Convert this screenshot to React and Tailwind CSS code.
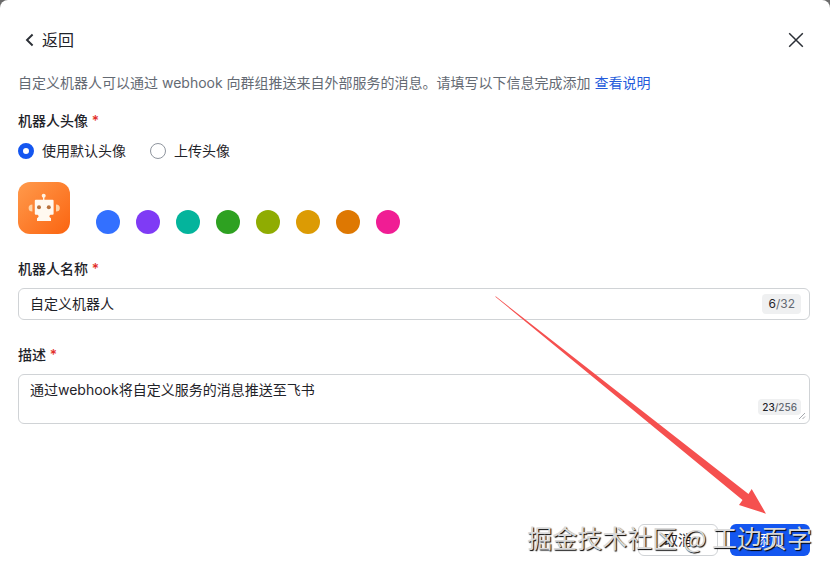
import React, { useState } from 'react';

const COLORS = [
  { name: 'blue', className: 'bg-[#3370ff]' },
  { name: 'purple', className: 'bg-[#7f3bf5]' },
  { name: 'turquoise', className: 'bg-[#04b49c]' },
  { name: 'green', className: 'bg-[#2ea121]' },
  { name: 'lime', className: 'bg-[#8fac02]' },
  { name: 'yellow', className: 'bg-[#dc9b04]' },
  { name: 'orange', className: 'bg-[#de7802]' },
  { name: 'carmine', className: 'bg-[#f01d94]' },
];

function RobotAvatar() {
  return (
    <svg className="h-[52px] w-[52px]" viewBox="0 0 52 52" role="img" aria-label="机器人">
      <defs>
        <linearGradient id="avatar-bg" x1="0" y1="0" x2="1" y2="1">
          <stop offset="0" stopColor="#ff9a4c" />
          <stop offset="1" stopColor="#fb6410" />
        </linearGradient>
      </defs>
      <rect width="52" height="52" rx="12" fill="url(#avatar-bg)" />
      <circle cx="25.7" cy="13.8" r="2" fill="#fff3e2" />
      <rect x="25" y="14" width="1.4" height="5" fill="#fff3e2" />
      <path d="M14.4 22.4a3.8 3.6 0 0 0 0 7.2zM38 22.4a3.800 3.6 0 0 1 0 7.2z" fill="#ffd3a6" />
      <path
        d="M17.800 17.800h16.800a1 1 0 0 1 1 1v13a1 1 0 0 1-1 1h-2.200c-1.200.8-1.400 1.800-.4 2.600l1 .8v2.800H19v-2.800l1-.8c1-.8.8-1.800-.4-2.600h-1.800a1 1 0 0 1-1-1v-13a1 1 0 0 1 1-1z"
        fill="#fff9f0"
      />
      <circle cx="21" cy="25.2" r="2" fill="#b8723c" />
      <circle cx="30.800" cy="25.2" r="2" fill="#b8723c" />
    </svg>
  );
}

function FieldLabel({ htmlFor, children }) {
  return (
    <label htmlFor={htmlFor} className="block font-medium">
      {children} <span className="text-[#e22e28]">*</span>
    </label>
  );
}

function AvatarRadio({ value, selected, onChange, children }) {
  return (
    <label className="flex items-center gap-2">
      <input
        type="radio"
        name="avatar"
        value={value}
        checked={selected === value}
        onChange={() => onChange(value)}
        className="h-4 w-4 appearance-none rounded-full border border-[#8f959e] bg-white checked:border-[5px] checked:border-[#1456f0]"
      />
      {children}
    </label>
  );
}

export default function App() {
  const [avatar, setAvatar] = useState('default');
  const [name, setName] = useState('自定义机器人');
  const [desc, setDesc] = useState('通过webhook将自定义服务的消息推送至飞书');

  return (
    <div className="min-h-screen bg-[#6b6b6b] font-['Inter','Noto_Sans_CJK_SC',sans-serif] text-sm leading-[22px] text-[#1f2329]">
      <main className="relative flex min-h-screen flex-col rounded-t-lg bg-white pt-7 pr-5 pb-[15px] pl-[18px]">
        <header className="flex h-6 items-center justify-between">
          <button type="button" className="flex items-center gap-1 pl-1 text-base">
            <svg className="h-4 w-4" viewBox="0 0 16 16" fill="none" stroke="#2b2f36" strokeWidth="1.9">
              <path d="M10.6 2.500L5 8l5.600 5.500" />
            </svg>
            返回
          </button>
          <button type="button" aria-label="关闭" className="mr-1.5">
            <svg className="h-4 w-4" viewBox="0 0 16 16" fill="none" stroke="#2b2f36" strokeWidth="1.5">
              <path d="M1.2 1.2l13.600 13.600M14.800 1.200L1.200 14.800" />
            </svg>
          </button>
        </header>

        <p className="mt-5 text-[#646a73]">
          自定义机器人可以通过 webhook 向群组推送来自外部服务的消息。请填写以下信息完成添加{' '}
          <a href="#help" className="text-[#245bdb]">查看说明</a>
        </p>

        <fieldset className="mt-4">
          <legend className="font-medium">
            机器人头像 <span className="text-[#e22e28]">*</span>
          </legend>
          <div className="mt-2 flex gap-6">
            <AvatarRadio value="default" selected={avatar} onChange={setAvatar}>使用默认头像</AvatarRadio>
            <AvatarRadio value="upload" selected={avatar} onChange={setAvatar}>上传头像</AvatarRadio>
          </div>
        </fieldset>

        <div className="mt-5 flex items-end">
          <RobotAvatar />
          <div className="ml-[26px] flex gap-4">
            {COLORS.map((c) => (
              <button key={c.name} type="button" aria-label={c.name} className={`h-6 w-6 rounded-full ${c.className}`} />
            ))}
          </div>
        </div>

        <div className="mt-6">
          <FieldLabel htmlFor="bot-name">机器人名称</FieldLabel>
          <div className="mt-2 flex h-8 items-center rounded-md border border-[#d0d3d6] pr-2 pl-[11px]">
            <input
              id="bot-name"
              type="text"
              maxLength={32}
              value={name}
              onChange={(e) => setName(e.target.value)}
              className="min-w-0 flex-1 outline-none"
            />
            <span className="rounded bg-[#eff0f1] px-1.5 text-xs leading-5 text-[#646a73]">
              <span className="text-[#1f2329]">{name.length}</span>/32
            </span>
          </div>
        </div>

        <div className="mt-6">
          <FieldLabel htmlFor="bot-desc">描述</FieldLabel>
          <div className="relative mt-2">
            <textarea
              id="bot-desc"
              maxLength={256}
              value={desc}
              onChange={(e) => setDesc(e.target.value)}
              className="block h-[50px] w-full resize-none rounded-md border border-[#d0d3d6] px-[11px] py-1 outline-none"
            />
            <span className="pointer-events-none absolute right-[9px] bottom-[9px] rounded bg-[#eff0f1] px-1 text-[10px] leading-4 font-medium text-[#646a73]">
              <span className="text-[#1f2329]">{desc.length}</span>/256
            </span>
            <svg className="pointer-events-none absolute right-1 bottom-1 h-2 w-2" viewBox="0 0 8 8" stroke="#a5a8ad" aria-hidden="true">
              <path d="M1 7L7 1M4.500 7L7 4.500" />
            </svg>
          </div>
        </div>

        <footer className="mt-auto flex justify-end gap-3 pt-6">
          <button type="button" className="h-8 w-20 rounded-md border border-[#d0d3d6] bg-white">取消</button>
          <button type="button" className="h-8 w-20 rounded-md bg-[#1456f0] text-white">添加</button>
        </footer>

        {/* arrow pointing at the submit button */}
        <svg className="pointer-events-none absolute right-16 bottom-14 h-[220px] w-[272px]" viewBox="0 0 272 220" aria-hidden="true">
          <path d="M1 1.500L2 1.500L254.500 199L257.700 194L272 218.700L245 210L248.500 205Z" fill="#f5504f" />
        </svg>

        <div className="pointer-events-none absolute right-[18px] bottom-4 text-[25px] leading-9 whitespace-nowrap text-[#d9d9d9] font-['Noto_Sans_CJK_SC',sans-serif] [text-shadow:1px_1px_1px_#000]">
          掘金技术社区 @ 工边页字
        </div>
      </main>
    </div>
  );
}
